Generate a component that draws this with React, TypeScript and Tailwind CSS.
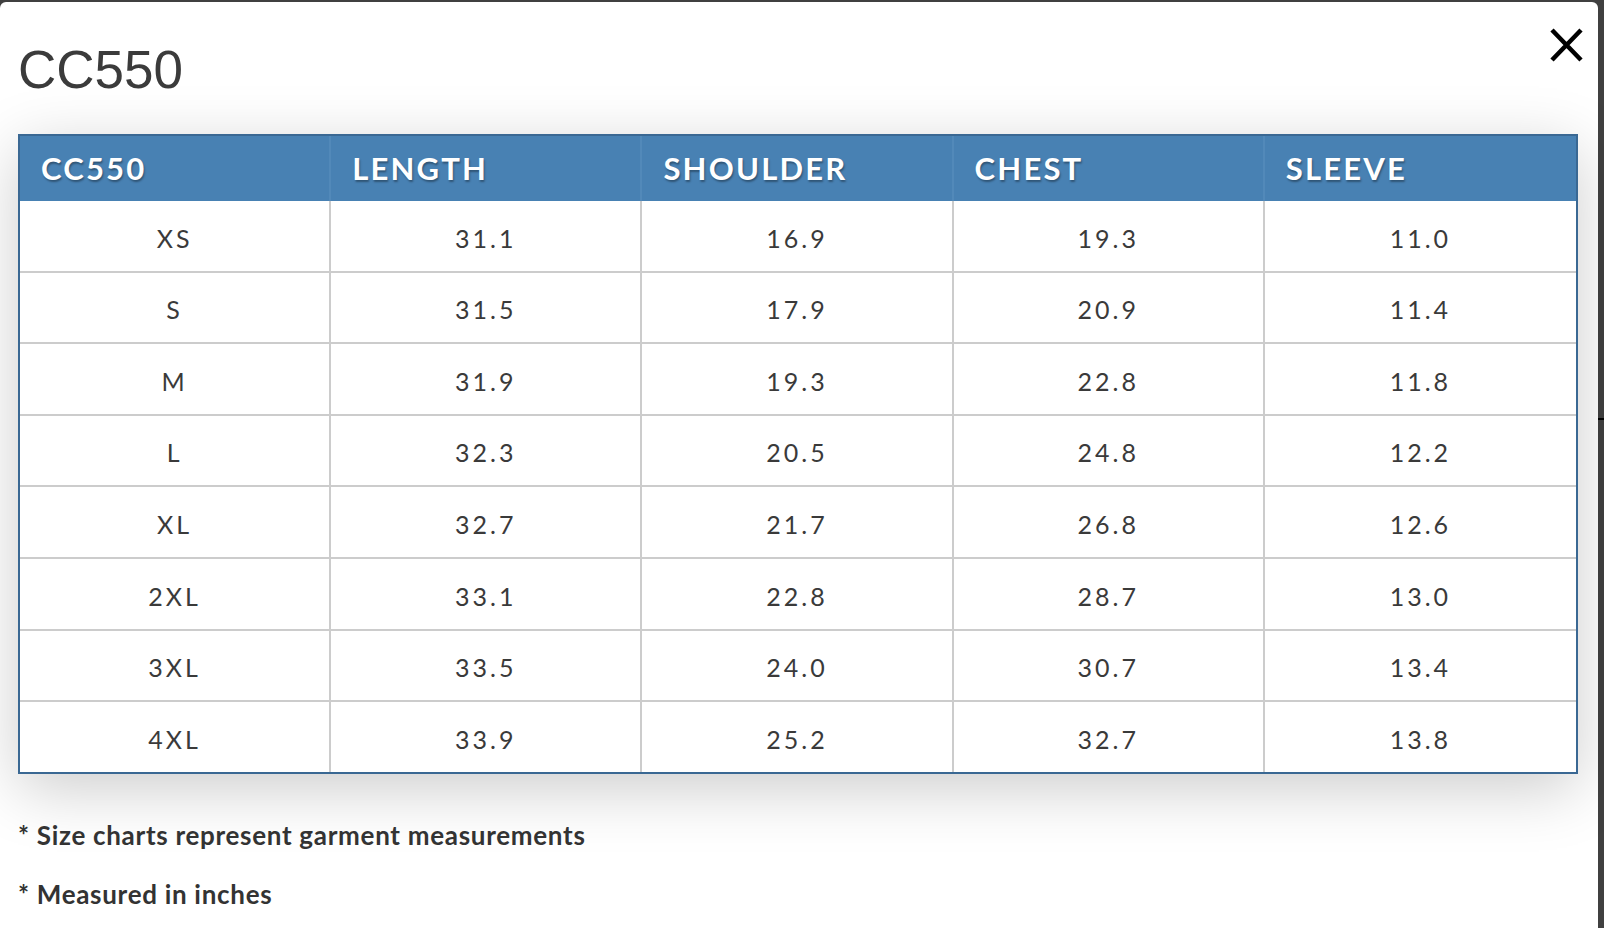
import React from 'react';

const columns = ['CC550', 'LENGTH', 'SHOULDER', 'CHEST', 'SLEEVE'];

const rows: string[][] = [
  ['XS', '31.1', '16.9', '19.3', '11.0'],
  ['S', '31.5', '17.9', '20.9', '11.4'],
  ['M', '31.9', '19.3', '22.8', '11.8'],
  ['L', '32.3', '20.5', '24.8', '12.2'],
  ['XL', '32.7', '21.7', '26.8', '12.6'],
  ['2XL', '33.1', '22.8', '28.7', '13.0'],
  ['3XL', '33.5', '24.0', '30.7', '13.4'],
  ['4XL', '33.9', '25.2', '32.7', '13.8'],
];

function CloseIcon() {
  return (
    <svg width="33" height="34" viewBox="0 0 33 34" fill="none" aria-hidden="true">
      <path d="M2 2 L31 32 M31 2 L2 32" stroke="#000" strokeWidth="4.5" />
    </svg>
  );
}

export default function App() {
  return (
    <div className="w-[1604px] h-[928px] overflow-hidden bg-[#404040] flex">
      {/* Modal */}
      <div className="relative mt-[2px] w-[1598px] shrink-0 bg-white rounded-t-[6px] font-['Lato',sans-serif]">
        <button aria-label="Close" className="absolute top-[26px] right-[15px]">
          <CloseIcon />
        </button>

        <h2 className="mt-[41px] ml-[18px] h-[53px] text-[53px] leading-[53px] text-[#3b3b3b] font-['Liberation_Sans',Arial,sans-serif] font-normal">
          CC550
        </h2>

        {/* Size table */}
        <div className="mt-[38px] ml-[18px] w-[1560px] border-2 border-[#3a6893] shadow-[0_15px_60px_rgba(0,0,0,0.2)]">
          <div className="grid grid-cols-5 h-[65px] bg-[#4881b3]">
            {columns.map((col, i) => (
              <div
                key={col}
                className={`flex items-center pl-[21px] text-[31px] font-bold tracking-[2.2px] text-white [text-shadow:1px_2px_2px_rgba(0,0,0,0.35)] ${
                  i < columns.length - 1 ? 'border-r-2 border-[#5289b9]' : ''
                }`}
              >
                {col}
              </div>
            ))}
          </div>
          {rows.map((row, r) => (
            <div
              key={row[0]}
              className={`grid grid-cols-5 bg-white ${r > 0 ? 'border-t-2 border-[#cccccc]' : ''}`}
            >
              {row.map((cell, i) => (
                <div
                  key={i}
                  className={`h-[69.6px] flex items-center justify-center pt-[5px] text-[25px] tracking-[3px] text-[#3a3a3a] ${
                    i < row.length - 1 ? 'border-r-2 border-[#cccccc]' : ''
                  }`}
                >
                  {cell}
                </div>
              ))}
            </div>
          ))}
        </div>

        <div className="mt-[49px] ml-[18px] flex flex-col gap-[35px] text-[26px] leading-[24px] font-bold tracking-[0.7px] text-[#333]">
          <p>* Size charts represent garment measurements</p>
          <p>* Measured in inches</p>
        </div>
      </div>

      {/* Page behind the modal */}
      <div className="flex-1 flex flex-col">
        <div className="mt-[418px] h-[2px] bg-black" />
      </div>
    </div>
  );
}
